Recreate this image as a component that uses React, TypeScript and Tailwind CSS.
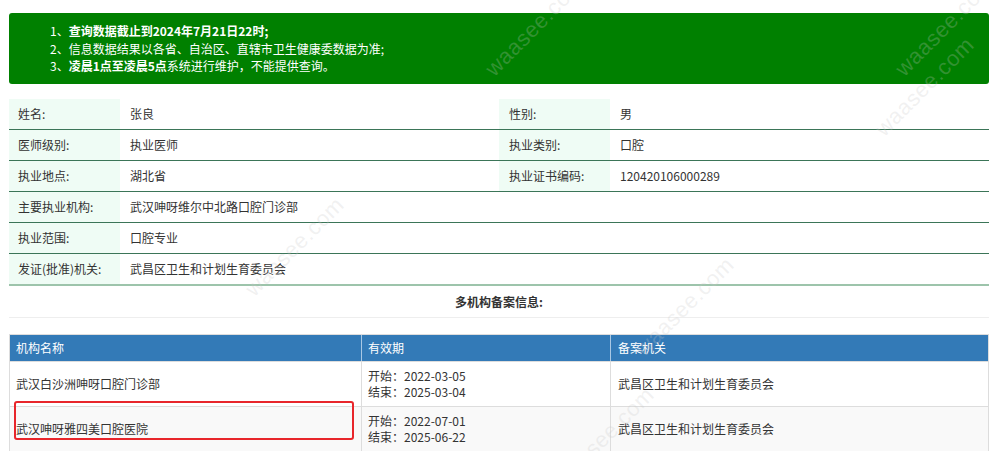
const FONT = "font-['Microsoft_YaHei','Noto_Sans_CJK_SC',sans-serif]";

const INFO: [string, string, string?, string?][] = [
  ['姓名:', '张良', '性别:', '男'],
  ['医师级别:', '执业医师', '执业类别:', '口腔'],
  ['执业地点:', '湖北省', '执业证书编码:', '120420106000289'],
  ['主要执业机构:', '武汉呻呀维尔中北路口腔门诊部'],
  ['执业范围:', '口腔专业'],
  ['发证(批准)机关:', '武昌区卫生和计划生育委员会'],
];

const ORGS = [
  {
    name: '武汉白沙洲呻呀口腔门诊部',
    start: '2022-03-05',
    end: '2025-03-04',
    dept: '武昌区卫生和计划生育委员会',
  },
  {
    name: '武汉呻呀雅四美口腔医院',
    start: '2022-07-01',
    end: '2025-06-22',
    dept: '武昌区卫生和计划生育委员会',
  },
];

// faint diagonal watermarks laid over the page
const MARKS = [
  { left: 470, top: 10 },
  { left: 880, top: 10 },
  { left: 230, top: 230 },
  { left: 620, top: 290 },
  { left: 860, top: 70 },
  { left: 540, top: 420 },
];

function Watermark({ left, top }: { left: number; top: number }) {
  return (
    <div
      className="pointer-events-none absolute -rotate-45 text-[22px] font-['Liberation_Sans',sans-serif] tracking-wide text-[#c8c8c8]/25"
      style={{ left, top }}
    >
      waasee.com
    </div>
  );
}

export default function App() {
  return (
    <div className={`relative h-[451px] w-[1000px] overflow-hidden bg-white px-[9px] pt-[13px] text-[12px] text-[#333] ${FONT}`}>
      <div className="h-[71px] w-[980px] rounded-[3px] bg-[#008000] pl-[41px] pt-[9px] leading-[17.5px] text-white">
        <div>
          1、<b>查询数据截止到2024年7月21日22时;</b>
        </div>
        <div>2、信息数据结果以各省、自治区、直辖市卫生健康委数据为准;</div>
        <div>
          3、<b>凌晨1点至凌晨5点</b>系统进行维护，不能提供查询。
        </div>
      </div>

      <div className="mt-[15px] w-[980px]">
        {INFO.map(([l1, v1, l2, v2], i) => (
          <div
            key={l1}
            className={`grid h-[31px] grid-cols-[111px_379px_111px_379px] ${
              i === INFO.length - 1 ? 'h-[32px] border-b-2 border-[#9dc4ab]' : 'border-b border-[#3b7558]'
            }`}
          >
            <div className="flex items-center bg-[#effcf5] pl-[9px]">{l1}</div>
            <div className="flex items-center pl-[10px]">{v1}</div>
            <div className={`flex items-center pl-[10px] ${l2 ? 'bg-[#effcf5]' : ''}`}>{l2}</div>
            <div className="flex items-center pl-[10px]">{v2}</div>
          </div>
        ))}
      </div>

      <div className="flex h-[32px] w-[980px] items-center justify-center border-b border-[#eeeeee] font-bold">
        多机构备案信息:
      </div>

      <div className="mt-[16px] w-[980px] border border-[#dddddd]">
        <div className="grid h-[26px] grid-cols-[352px_249px_1fr] bg-[#337ab7] text-white">
          <div className="flex items-center border-r border-[#a9c8e4] pl-[6px]">机构名称</div>
          <div className="flex items-center border-r border-[#a9c8e4] pl-[6px]">有效期</div>
          <div className="flex items-center pl-[7px]">备案机关</div>
        </div>
        {ORGS.map((o, i) => (
          <div
            key={o.name}
            className={`grid h-[45px] grid-cols-[352px_249px_1fr] border-t border-[#dddddd] ${i === 1 ? 'bg-[#f9f9f9]' : 'bg-white'}`}
          >
            <div className="relative flex items-center border-r border-[#dddddd] pl-[6px]">
              {o.name}
              {i === 1 && (
                <div className="absolute left-[4px] top-[-6px] h-[39px] w-[340px] rounded-[3px] border-2 border-[#e8262b]" />
              )}
            </div>
            <div className="flex flex-col justify-center border-r border-[#dddddd] pl-[6px] leading-[16px]">
              <div>开始：{o.start}</div>
              <div>结束：{o.end}</div>
            </div>
            <div className="flex items-center pl-[7px]">{o.dept}</div>
          </div>
        ))}
      </div>

      {MARKS.map((m, i) => (
        <Watermark key={i} left={m.left} top={m.top} />
      ))}
    </div>
  );
}
